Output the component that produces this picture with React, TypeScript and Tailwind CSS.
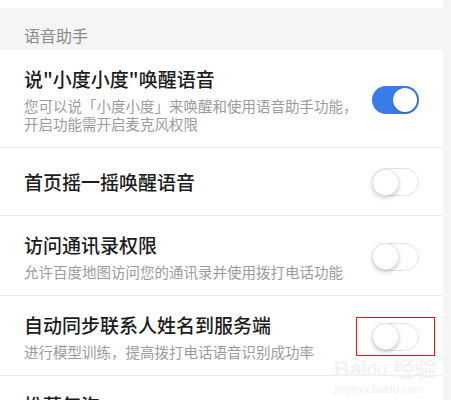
import React from 'react';

type Item = {
  title: string;
  desc?: string[];
  on: boolean;
  marked?: boolean;
};

const items: Item[] = [
  {
    title: '说"小度小度"唤醒语音',
    desc: ['您可以说「小度小度」来唤醒和使用语音助手功能，', '开启功能需开启麦克风权限'],
    on: true,
  },
  { title: '首页摇一摇唤醒语音', on: false },
  { title: '访问通讯录权限', desc: ['允许百度地图访问您的通讯录并使用拨打电话功能'], on: false },
  {
    title: '自动同步联系人姓名到服务端',
    desc: ['进行模型训练，提高拨打电话语音识别成功率'],
    on: false,
    marked: true,
  },
  { title: '推荐气泡', desc: ['推荐气泡'], on: false },
];

function Toggle({ on }: { on: boolean }) {
  if (on) {
    return (
      <div className="w-[47px] h-[28px] rounded-full bg-[#3a7de9] flex items-center justify-end pr-[2px]">
        <div className="w-[24px] h-[24px] rounded-full bg-white shadow-[0_1px_3px_rgba(0,0,0,0.25)]" />
      </div>
    );
  }
  return (
    <div className="w-[47px] h-[28px] rounded-full bg-white border border-[#e2e2e2] flex items-center">
      <div className="w-[27px] h-[27px] -ml-px rounded-full bg-white border border-[#e6e6e6] shadow-[0_2px_4px_rgba(0,0,0,0.2)]" />
    </div>
  );
}

export default function App() {
  return (
    <div className="w-[451px] h-[400px] overflow-hidden bg-[#f5f5f6] flex items-start font-['Noto_Sans_CJK_SC',sans-serif]">
      <div className="w-[443px] shrink-0 flex flex-col">
        <div className="h-[8px] shrink-0 bg-white" />

        {/* section header */}
        <div className="h-[42px] shrink-0 pl-6 pt-4 text-[16px] leading-[22px] text-[#8a8a8a]">语音助手</div>

        <div className="bg-white relative shrink-0">
          {items.map((item, i) => (
            <div
              key={i}
              className={`flex items-center justify-between pl-6 pr-6 border-b border-[#ececec] ${
                item.desc ? 'pt-4 pb-[14px]' : 'pt-[20px] pb-[19px]'
              }`}
            >
              <div className="flex flex-col gap-[5px]">
                <div className="text-[19px] leading-[26px] font-medium text-[#1c1c1c]">{item.title}</div>
                {item.desc && (
                  <div className="text-[14.5px] leading-[18px] text-[#9b9b9b]">
                    {item.desc.map((line, j) => (
                      <div key={j}>{line}</div>
                    ))}
                  </div>
                )}
              </div>
              <div className="relative">
                <Toggle on={item.on} />
                {item.marked && (
                  <div className="absolute -top-[6px] -bottom-[5px] -left-4 -right-4 border-[1.5px] border-[#e8151b]" />
                )}
              </div>
            </div>
          ))}

          {/* watermark */}
          <div className="absolute left-[334px] top-[304px] flex flex-col items-start pointer-events-none select-none">
            <div className="text-[22px] leading-[24px] font-bold text-[#f3f3f3] tracking-tight font-['Liberation_Sans',sans-serif]">
              Bai<span className="text-[18px]">du</span> <span className="font-['Noto_Sans_CJK_SC',sans-serif]">经验</span>
            </div>
            <div className="text-[11px] leading-[14px] text-[#f0f0f0] font-['Liberation_Sans',sans-serif]">jingyan.baidu.com</div>
          </div>
        </div>
      </div>
      <div className="flex-1" />
    </div>
  );
}
